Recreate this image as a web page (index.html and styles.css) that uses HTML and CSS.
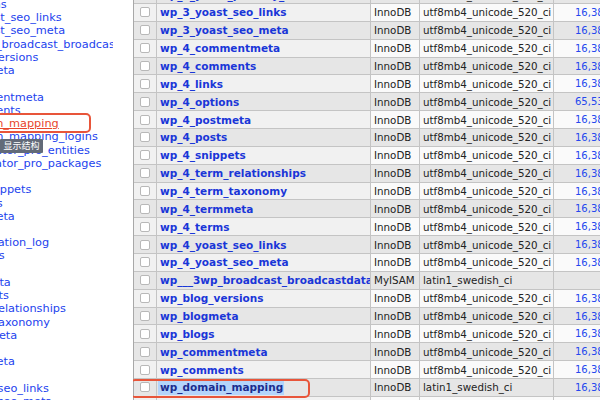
FILE: index.html
```html
<!DOCTYPE html>
<html lang="zh">
<head>
<meta charset="utf-8">
<title>phpMyAdmin</title>
<link rel="stylesheet" href="styles.css">
</head>
<body>
<div class="app">
  <nav class="sidebar">
    <ul class="nav-list">
      <li class="nav-item"><a class="nav-link" href="#">wp_4_terms</a></li>
      <li class="nav-item"><a class="nav-link" href="#">wp_4_yoast_seo_links</a></li>
      <li class="nav-item"><a class="nav-link" href="#">wp_4_yoast_seo_meta</a></li>
      <li class="nav-item"><a class="nav-link" href="#">wp___3wp_broadcast_broadcastdata</a></li>
      <li class="nav-item"><a class="nav-link" href="#">wp_blog_versions</a></li>
      <li class="nav-item"><a class="nav-link" href="#">wp_blogmeta</a></li>
      <li class="nav-item"><a class="nav-link" href="#">wp_blogs</a></li>
      <li class="nav-item"><a class="nav-link" href="#">wp_commentmeta</a></li>
      <li class="nav-item"><a class="nav-link" href="#">wp_comments</a></li>
      <li class="nav-item is-hover"><a class="nav-link" href="#">wp_domain_mapping</a><span class="hl-box"></span><span class="tooltip">显示结构</span></li>
      <li class="nav-item"><a class="nav-link" href="#">wp_domain_mapping_logins</a></li>
      <li class="nav-item"><a class="nav-link" href="#">wp_duplicator_pro_entities</a></li>
      <li class="nav-item"><a class="nav-link" href="#">wp_duplicator_pro_packages</a></li>
      <li class="nav-item"><a class="nav-link" href="#">wp_links</a></li>
      <li class="nav-item"><a class="nav-link" href="#">wp_ms_snippets</a></li>
      <li class="nav-item"><a class="nav-link" href="#">wp_options</a></li>
      <li class="nav-item"><a class="nav-link" href="#">wp_postmeta</a></li>
      <li class="nav-item"><a class="nav-link" href="#">wp_posts</a></li>
      <li class="nav-item"><a class="nav-link" href="#">wp_registration_log</a></li>
      <li class="nav-item"><a class="nav-link" href="#">wp_signups</a></li>
      <li class="nav-item"><a class="nav-link" href="#">wp_site</a></li>
      <li class="nav-item"><a class="nav-link" href="#">wp_sitemeta</a></li>
      <li class="nav-item"><a class="nav-link" href="#">wp_snippets</a></li>
      <li class="nav-item"><a class="nav-link" href="#">wp_term_relationships</a></li>
      <li class="nav-item"><a class="nav-link" href="#">wp_term_taxonomy</a></li>
      <li class="nav-item"><a class="nav-link" href="#">wp_termmeta</a></li>
      <li class="nav-item"><a class="nav-link" href="#">wp_terms</a></li>
      <li class="nav-item"><a class="nav-link" href="#">wp_usermeta</a></li>
      <li class="nav-item"><a class="nav-link" href="#">wp_users</a></li>
      <li class="nav-item"><a class="nav-link" href="#">wp_yoast_seo_links</a></li>
      <li class="nav-item"><a class="nav-link" href="#">wp_yoast_seo_meta</a></li>
    </ul>
  </nav>
  <main class="content">
    <div class="db-table">
      <div class="row"><span class="cell cb"><span class="check"></span></span><span class="cell name"><a href="#">wp_3_yoast_primary_term</a></span><span class="cell">InnoDB</span><span class="cell">utf8mb4_unicode_520_ci</span><span class="cell num">16,384</span></div>
      <div class="row"><span class="cell cb"><span class="check"></span></span><span class="cell name"><a href="#">wp_3_yoast_seo_links</a></span><span class="cell">InnoDB</span><span class="cell">utf8mb4_unicode_520_ci</span><span class="cell num">16,384</span></div>
      <div class="row"><span class="cell cb"><span class="check"></span></span><span class="cell name"><a href="#">wp_3_yoast_seo_meta</a></span><span class="cell">InnoDB</span><span class="cell">utf8mb4_unicode_520_ci</span><span class="cell num">16,384</span></div>
      <div class="row"><span class="cell cb"><span class="check"></span></span><span class="cell name"><a href="#">wp_4_commentmeta</a></span><span class="cell">InnoDB</span><span class="cell">utf8mb4_unicode_520_ci</span><span class="cell num">16,384</span></div>
      <div class="row"><span class="cell cb"><span class="check"></span></span><span class="cell name"><a href="#">wp_4_comments</a></span><span class="cell">InnoDB</span><span class="cell">utf8mb4_unicode_520_ci</span><span class="cell num">16,384</span></div>
      <div class="row"><span class="cell cb"><span class="check"></span></span><span class="cell name"><a href="#">wp_4_links</a></span><span class="cell">InnoDB</span><span class="cell">utf8mb4_unicode_520_ci</span><span class="cell num">16,384</span></div>
      <div class="row"><span class="cell cb"><span class="check"></span></span><span class="cell name"><a href="#">wp_4_options</a></span><span class="cell">InnoDB</span><span class="cell">utf8mb4_unicode_520_ci</span><span class="cell num">65,536</span></div>
      <div class="row"><span class="cell cb"><span class="check"></span></span><span class="cell name"><a href="#">wp_4_postmeta</a></span><span class="cell">InnoDB</span><span class="cell">utf8mb4_unicode_520_ci</span><span class="cell num">16,384</span></div>
      <div class="row"><span class="cell cb"><span class="check"></span></span><span class="cell name"><a href="#">wp_4_posts</a></span><span class="cell">InnoDB</span><span class="cell">utf8mb4_unicode_520_ci</span><span class="cell num">16,384</span></div>
      <div class="row"><span class="cell cb"><span class="check"></span></span><span class="cell name"><a href="#">wp_4_snippets</a></span><span class="cell">InnoDB</span><span class="cell">utf8mb4_unicode_520_ci</span><span class="cell num">16,384</span></div>
      <div class="row"><span class="cell cb"><span class="check"></span></span><span class="cell name"><a href="#">wp_4_term_relationships</a></span><span class="cell">InnoDB</span><span class="cell">utf8mb4_unicode_520_ci</span><span class="cell num">16,384</span></div>
      <div class="row"><span class="cell cb"><span class="check"></span></span><span class="cell name"><a href="#">wp_4_term_taxonomy</a></span><span class="cell">InnoDB</span><span class="cell">utf8mb4_unicode_520_ci</span><span class="cell num">16,384</span></div>
      <div class="row"><span class="cell cb"><span class="check"></span></span><span class="cell name"><a href="#">wp_4_termmeta</a></span><span class="cell">InnoDB</span><span class="cell">utf8mb4_unicode_520_ci</span><span class="cell num">16,384</span></div>
      <div class="row"><span class="cell cb"><span class="check"></span></span><span class="cell name"><a href="#">wp_4_terms</a></span><span class="cell">InnoDB</span><span class="cell">utf8mb4_unicode_520_ci</span><span class="cell num">16,384</span></div>
      <div class="row"><span class="cell cb"><span class="check"></span></span><span class="cell name"><a href="#">wp_4_yoast_seo_links</a></span><span class="cell">InnoDB</span><span class="cell">utf8mb4_unicode_520_ci</span><span class="cell num">16,384</span></div>
      <div class="row"><span class="cell cb"><span class="check"></span></span><span class="cell name"><a href="#">wp_4_yoast_seo_meta</a></span><span class="cell">InnoDB</span><span class="cell">utf8mb4_unicode_520_ci</span><span class="cell num">16,384</span></div>
      <div class="row"><span class="cell cb"><span class="check"></span></span><span class="cell name"><a href="#">wp___3wp_broadcast_broadcastdata</a></span><span class="cell">MyISAM</span><span class="cell">latin1_swedish_ci</span><span class="cell num"></span></div>
      <div class="row"><span class="cell cb"><span class="check"></span></span><span class="cell name"><a href="#">wp_blog_versions</a></span><span class="cell">InnoDB</span><span class="cell">utf8mb4_unicode_520_ci</span><span class="cell num">16,384</span></div>
      <div class="row"><span class="cell cb"><span class="check"></span></span><span class="cell name"><a href="#">wp_blogmeta</a></span><span class="cell">InnoDB</span><span class="cell">utf8mb4_unicode_520_ci</span><span class="cell num">16,384</span></div>
      <div class="row"><span class="cell cb"><span class="check"></span></span><span class="cell name"><a href="#">wp_blogs</a></span><span class="cell">InnoDB</span><span class="cell">utf8mb4_unicode_520_ci</span><span class="cell num">16,384</span></div>
      <div class="row"><span class="cell cb"><span class="check"></span></span><span class="cell name"><a href="#">wp_commentmeta</a></span><span class="cell">InnoDB</span><span class="cell">utf8mb4_unicode_520_ci</span><span class="cell num">16,384</span></div>
      <div class="row"><span class="cell cb"><span class="check"></span></span><span class="cell name"><a href="#">wp_comments</a></span><span class="cell">InnoDB</span><span class="cell">utf8mb4_unicode_520_ci</span><span class="cell num">16,384</span></div>
      <div class="row is-marked"><span class="cell cb"><span class="check"></span></span><span class="cell name"><a href="#"><span class="selected">wp_domain_mapping</span></a></span><span class="cell">InnoDB</span><span class="cell">latin1_swedish_ci</span><span class="cell num">16,384</span><span class="row-box"></span></div>
      <div class="row"><span class="cell cb"><span class="check"></span></span><span class="cell name"><a href="#">wp_domain_mapping_logins</a></span><span class="cell">InnoDB</span><span class="cell">latin1_swedish_ci</span><span class="cell num">16,384</span></div>
    </div>
  </main>
</div>
</body>
</html>
```

FILE: styles.css
```css
* {
  box-sizing: border-box;
}

html,
body {
  margin: 0;
  padding: 0;
}

body {
  width: 600px;
  height: 400px;
  overflow: hidden;
  background: #ffffff;
  font-family: "DejaVu Sans", Verdana, sans-serif;
}

.app {
  display: flex;
  height: 400px;
}

/* ---------- navigation ---------- */
.sidebar {
  flex: 0 0 133px;
  background: #ffffff;
}

.nav-list {
  list-style: none;
  margin: -2px 0 0;
  padding: 0;
  width: 113px;
  overflow: hidden;
  font-size: 11.3px;
  line-height: 13.24px;
}

.nav-item {
  position: relative;
  white-space: nowrap;
  height: 13.24px;
}

.nav-link {
  margin-left: -61px;
  color: #2343ee;
  text-decoration: none;
}

.nav-item.is-hover .nav-link {
  color: #e8452c;
  text-decoration: underline;
}

.hl-box {
  position: absolute;
  z-index: 1;
  left: -6px;
  top: -4px;
  width: 97px;
  height: 20px;
  border: 2px solid #e8553a;
  border-radius: 5px;
}

.tooltip {
  position: absolute;
  z-index: 2;
  left: 0;
  top: 21.8px;
  width: 43px;
  height: 14px;
  background: #626a78;
  color: #ffffff;
  font-family: "Noto Sans CJK SC", sans-serif;
  font-size: 9px;
  line-height: 14px;
  text-align: center;
  border-radius: 1px;
}

/* ---------- table list ---------- */
.content {
  flex: 1;
  overflow: hidden;
}

.db-table {
  width: 488px;
  margin-top: -13.86px;
  border-left: 1px solid #a8a8a8;
}

.row {
  position: relative;
  display: grid;
  grid-template-columns: 23px 214px 49px 134px 67px;
  height: 17.86px;
}

.cell {
  display: flex;
  align-items: center;
  padding: 0 3px;
  border-right: 1px solid #c4c4c4;
  border-bottom: 1px solid #c4c4c4;
  white-space: nowrap;
  overflow: hidden;
  font-size: 10.3px;
  color: #222222;
}

.row:nth-child(odd) .cell {
  background: #e6e6e6;
}

.row:nth-child(even) .cell {
  background: #fafafa;
}

.row:nth-child(even) .cb,
.row:nth-child(even) .name {
  background: #f1f1f1;
}

.cb {
  justify-content: center;
  padding: 0;
}

.check {
  width: 10px;
  height: 10px;
  border: 1px solid #b8b8b8;
  border-radius: 2px;
  background: #ffffff;
}

.name {
  font-size: 10.5px;
}

.name a {
  color: #1a36d8;
  font-weight: bold;
  text-decoration: none;
}

.num {
  justify-content: flex-end;
  padding-right: 10px;
  font-size: 10px;
  color: #2448ee;
}

.selected {
  background: #b4d4fb;
  color: #1b2c8f;
  padding: 2px 1px 2px 2px;
  margin-left: -2px;
}

.row-box {
  position: absolute;
  z-index: 1;
  left: -4px;
  top: 0;
  width: 180px;
  height: 19px;
  border: 2px solid #e8553a;
  border-radius: 5px;
}
```
